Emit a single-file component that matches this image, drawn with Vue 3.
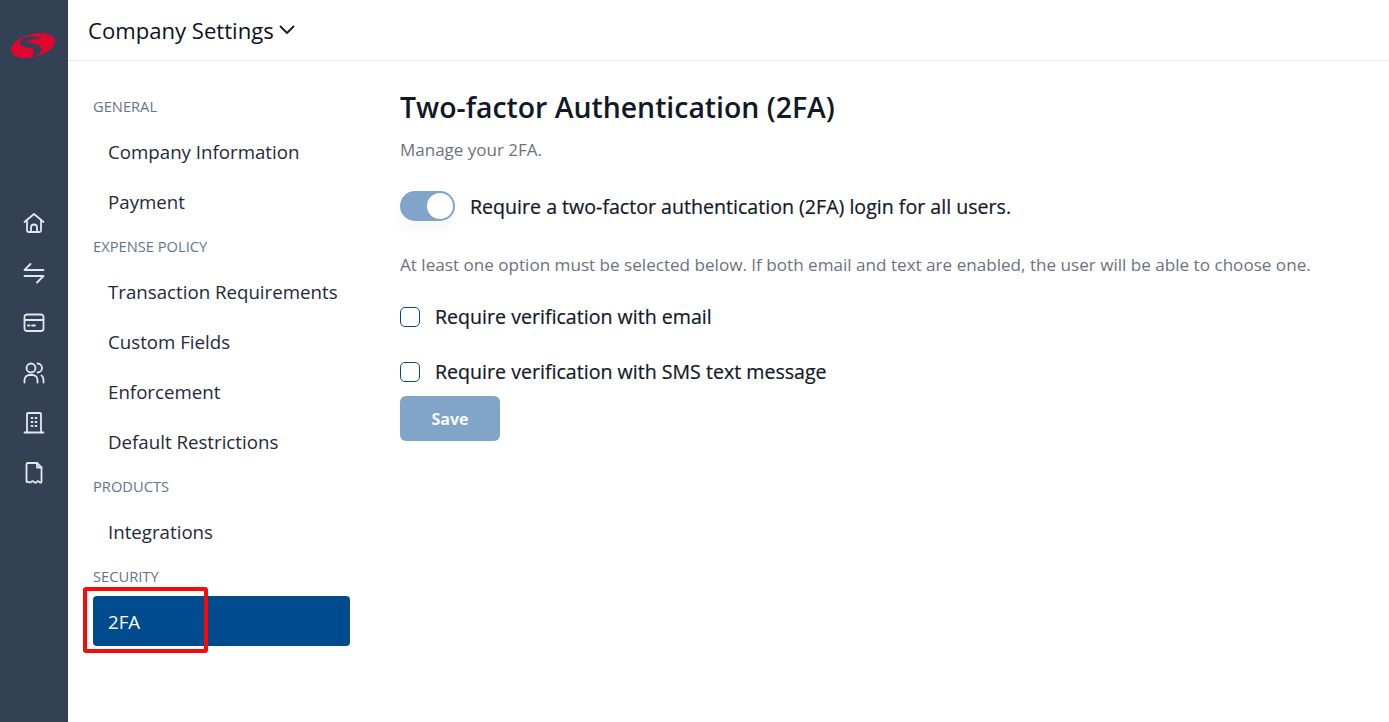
<script setup>
import { ref } from 'vue'

const railIcons = [
  ['M2.500 11 12 3 21.500 11', 'M5 9V19.500A1.500 1.500 0 0 0 6.500 21H17.500A1.500 1.500 0 0 0 19 19.500V9', 'M9 21V16.500a3 3 0 0 1 6 0V21'],
  ['M8.500 3 2.500 9H21.500', 'M2.500 15H21.500L15 21.500'],
  ['M5 3.500H19a2.500 2.500 0 0 1 2.500 2.500V17.500a2.500 2.500 0 0 1-2.500 2.500H5A2.500 2.500 0 0 1 2.500 17.500V6A2.500 2.500 0 0 1 5 3.500Z', 'M2.500 9H21.500', 'M6 14.500H7.500', 'M10 14.500H13'],
  ['M9 2.500a4.500 4.500 0 1 1 0 9 4.500 4.500 0 0 1 0-9Z', 'M2.500 21.500V19a5 5 0 0 1 5-5h3a5 5 0 0 1 5 5V21.500', 'M15.500 2.500a4.500 4.500 0 0 1 0 9', 'M19.500 14.500a5 5 0 0 1 2 4.500V21.500'],
  ['M5 21.500V3a1 1 0 0 1 1-1H18a1 1 0 0 1 1 1V21.500', 'M2.500 21.500H21.500', 'M9.500 7H10.500', 'M13.500 7H14.500', 'M9.500 11H10.500', 'M13.500 11H14.500', 'M9.500 15H10.500', 'M13.500 15H14.500'],
  ['M4.500 3.500A1.500 1.500 0 0 1 6 2H15L19.500 6.500V20.500C19.500 22 18 22 17.200 20.800 16.300 19.800 15.700 19.800 14.800 20.800 13.800 22 13 22 12 20.800 11 19.800 10.200 19.800 9.200 20.800 8.300 22 7.700 22 6.800 20.800 6 19.800 4.500 22 4.500 20.500Z', 'M15 2V6.500H19.500'],
]

const sections = [
  { title: 'GENERAL', items: ['Company Information', 'Payment'] },
  { title: 'EXPENSE POLICY', items: ['Transaction Requirements', 'Custom Fields', 'Enforcement', 'Default Restrictions'] },
  { title: 'PRODUCTS', items: ['Integrations'] },
  { title: 'SECURITY', items: ['2FA'] },
]

const requireAll = ref(true)
const useEmail = ref(false)
const useSms = ref(false)
</script>

<template>
  <div class="layout">
    <aside class="rail">
      <svg class="logo" viewBox="0 0 44 27">
        <ellipse cx="22" cy="13.500" rx="22.500" ry="11.500" transform="rotate(-15 22 13.500)" fill="#e0062f" />
        <path d="M31 6C22 3 10 4 9 10.500 8.500 14 14 15 19 16 24 17 25 19 20 25L25 24C31 20 33 16 28 13.500 24 11.500 17 11.500 17 9.500 17 8 24 7 31 6Z" fill="#334155" />
      </svg>
      <nav class="rail-icons">
        <svg v-for="(icon, i) in railIcons" :key="i" class="rail-icon" viewBox="0 0 24 24">
          <path v-for="d in icon" :key="d" :d="d" />
        </svg>
      </nav>
    </aside>

    <div class="page">
      <header class="topbar">
        <span class="topbar-title">Company Settings</span>
        <svg class="chevron" viewBox="0 0 16 10"><path d="M1.500 1.500 8 8l6.500-6.500" /></svg>
      </header>

      <div class="content">
        <nav class="side">
          <template v-for="section in sections" :key="section.title">
            <div class="side-title">{{ section.title }}</div>
            <div
              v-for="item in section.items"
              :key="item"
              class="side-item"
              :class="{ active: item === '2FA' }"
            >
              {{ item }}
              <span v-if="item === '2FA'" class="highlight"></span>
            </div>
          </template>
        </nav>

        <main class="main">
          <h1>Two-factor Authentication (2FA)</h1>
          <p class="sub">Manage your 2FA.</p>

          <div class="toggle-row">
            <button class="toggle" :class="{ on: requireAll }" @click="requireAll = !requireAll">
              <span class="knob"></span>
            </button>
            <span class="label">Require a two-factor authentication (2FA) login for all users.</span>
          </div>

          <p class="hint">At least one option must be selected below. If both email and text are enabled, the user will be able to choose one.</p>

          <label class="check-row">
            <input v-model="useEmail" type="checkbox" />
            <span class="label">Require verification with email</span>
          </label>
          <label class="check-row">
            <input v-model="useSms" type="checkbox" />
            <span class="label">Require verification with SMS text message</span>
          </label>

          <button class="save" disabled>Save</button>
        </main>
      </div>
    </div>
  </div>
</template>

<style>
body {
  margin: 0;
  background: #fff;
}
</style>

<style scoped>
.layout {
  display: flex;
  height: 722px;
  overflow: hidden;
  font-family: "Open Sans", "Noto Sans", sans-serif;
  color: #111827;
}

.rail {
  width: 68px;
  flex-shrink: 0;
  background: #334155;
  display: flex;
  flex-direction: column;
  align-items: center;
}

.logo {
  width: 44px;
  height: 27px;
  margin-top: 32px;
  margin-left: -2px;
  overflow: visible;
}

.rail-icons {
  display: flex;
  flex-direction: column;
  align-items: center;
  gap: 26px;
  margin-top: 152px;
  margin-right: 1px;
}

.rail-icon {
  width: 24px;
  height: 24px;
  fill: none;
  stroke: #e2e8f0;
  stroke-width: 1.8;
  stroke-linecap: round;
  stroke-linejoin: round;
}

.page {
  flex: 1;
  min-width: 0;
}

.topbar {
  display: flex;
  align-items: center;
  gap: 5px;
  box-sizing: border-box;
  height: 61px;
  padding-left: 20px;
  border-bottom: 1px solid #e2e8f0;
}

.topbar-title {
  font-size: 22.100px;
  font-weight: 500;
  color: #0b1220;
}

.chevron {
  width: 16px;
  height: 10px;
  fill: none;
  stroke: #111827;
  stroke-width: 1.8;
  stroke-linecap: round;
  stroke-linejoin: round;
}

.content {
  display: flex;
}

.side {
  width: 257px;
  margin-left: 25px;
  padding-top: 25px;
  flex-shrink: 0;
}

.side-title {
  height: 40px;
  line-height: 40px;
  font-size: 14.700px;
  font-weight: 500;
  color: #64748b;
}

.side-item {
  position: relative;
  height: 50px;
  line-height: 52px;
  padding-left: 15px;
  font-size: 18.700px;
  color: #1e293b;
  border-radius: 4px;
}

.side-item.active {
  background: #004b8d;
  color: #fff;
}

.highlight {
  position: absolute;
  left: -10px;
  top: -9px;
  width: 125px;
  height: 66px;
  box-sizing: border-box;
  border: 4px solid #f60b0b;
  border-radius: 3px;
}

.main {
  margin-left: 50px;
  padding-top: 26px;
  flex: 1;
  min-width: 0;
}

h1 {
  margin: 0;
  font-size: 28.400px;
  line-height: 40px;
  font-weight: 600;
  color: #111827;
}

.sub {
  margin: 11px 0 0;
  font-size: 17px;
  line-height: 24px;
  color: #6b7280;
  font-weight: 500;
}

.toggle-row {
  display: flex;
  align-items: center;
  gap: 15px;
  margin-top: 29px;
}

.toggle {
  position: relative;
  width: 55px;
  height: 30px;
  padding: 0;
  border: 0;
  border-radius: 15px;
  background: #80a5c8;
  box-shadow: 0 8px 14px rgba(15, 23, 42, 0.04);
}

.knob {
  position: absolute;
  top: 2px;
  left: 27px;
  width: 26px;
  height: 26px;
  border-radius: 50%;
  background: #fff;
}

.label {
  font-size: 19.600px;
  font-weight: 500;
  color: #111827;
  -webkit-text-stroke: 0.2px #111827;
}

.hint {
  margin: 32px 0 0;
  font-size: 17.100px;
  line-height: 24px;
  color: #6b7280;
  white-space: nowrap;
}

.check-row {
  display: flex;
  align-items: center;
  gap: 15px;
  height: 55px;
}

.check-row:first-of-type {
  margin-top: 12px;
}

.check-row input {
  appearance: none;
  width: 20px;
  height: 20px;
  margin: 0;
  border: 1px solid #004b8d;
  border-radius: 5px;
  background: #fff;
}

.save {
  display: block;
  width: 100px;
  height: 45px;
  margin-top: -3px;
  border: 0;
  border-radius: 6px;
  background: #80a5c8;
  color: #f8fafc;
  font: 700 16px "Open Sans", "Noto Sans", sans-serif;
}
</style>
